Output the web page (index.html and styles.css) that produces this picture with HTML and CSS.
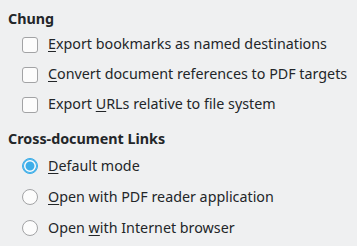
FILE: index.html
```html
<!DOCTYPE html>
<html>
<head>
<meta charset="utf-8">
<link rel="stylesheet" href="styles.css">
</head>
<body>
<div class="page">
  <div class="group">
    <div class="heading">Chung</div>
    <div class="row"><span class="check"></span><span class="label"><u>E</u>xport bookmarks as named destinations</span></div>
    <div class="row"><span class="check"></span><span class="label"><u>C</u>onvert document references to PDF targets</span></div>
    <div class="row"><span class="check"></span><span class="label">Export <u>U</u>RLs relative to file system</span></div>
  </div>
  <div class="group group2">
    <div class="heading">Cross-document Links</div>
    <div class="row rrow"><span class="radio on"></span><span class="label"><u>D</u>efault mode</span></div>
    <div class="row rrow"><span class="radio"></span><span class="label"><u>O</u>pen with PDF reader application</span></div>
    <div class="row rrow"><span class="radio"></span><span class="label">Open <u>w</u>ith Internet browser</span></div>
  </div>
</div>
</body>
</html>
```
FILE: styles.css
```css
html, body {
  margin: 0;
  padding: 0;
  background: #eff0f1;
}
body {
  font-family: "Noto Sans", "Open Sans", sans-serif;
  font-size: 14.3px;
  color: #232629;
}
.page {
  padding: 9px 0 0 8px;
}
.heading {
  font-weight: bold;
  line-height: 20px;
  height: 20px;
}
.row {
  display: flex;
  align-items: center;
  height: 30px;
  padding-left: 14px;
  gap: 10px;
}
.rrow {
  height: 31px;
}
.group2 {
  margin-top: 10px;
}
.group2 .heading {
  margin-bottom: 1px;
}
.label {
  line-height: 20px;
  white-space: nowrap;
}
.label u {
  text-decoration: underline;
  text-decoration-thickness: 1px;
  text-underline-offset: 2px;
}
.check {
  width: 14px;
  height: 14px;
  border: 1px solid #a2a3a5;
  border-radius: 3px;
  background: #fcfcfc;
  flex: none;
  margin-top: 2px;
}
.radio {
  width: 14px;
  height: 14px;
  border: 1px solid #a2a3a5;
  border-radius: 50%;
  background: #fcfcfc;
  flex: none;
}
.radio.on {
  border-color: #3daee9;
  background: #3daee9;
  box-shadow: inset 0 0 0 1px #3daee9, inset 0 0 0 2.5px #fcfcfc;
}
```
